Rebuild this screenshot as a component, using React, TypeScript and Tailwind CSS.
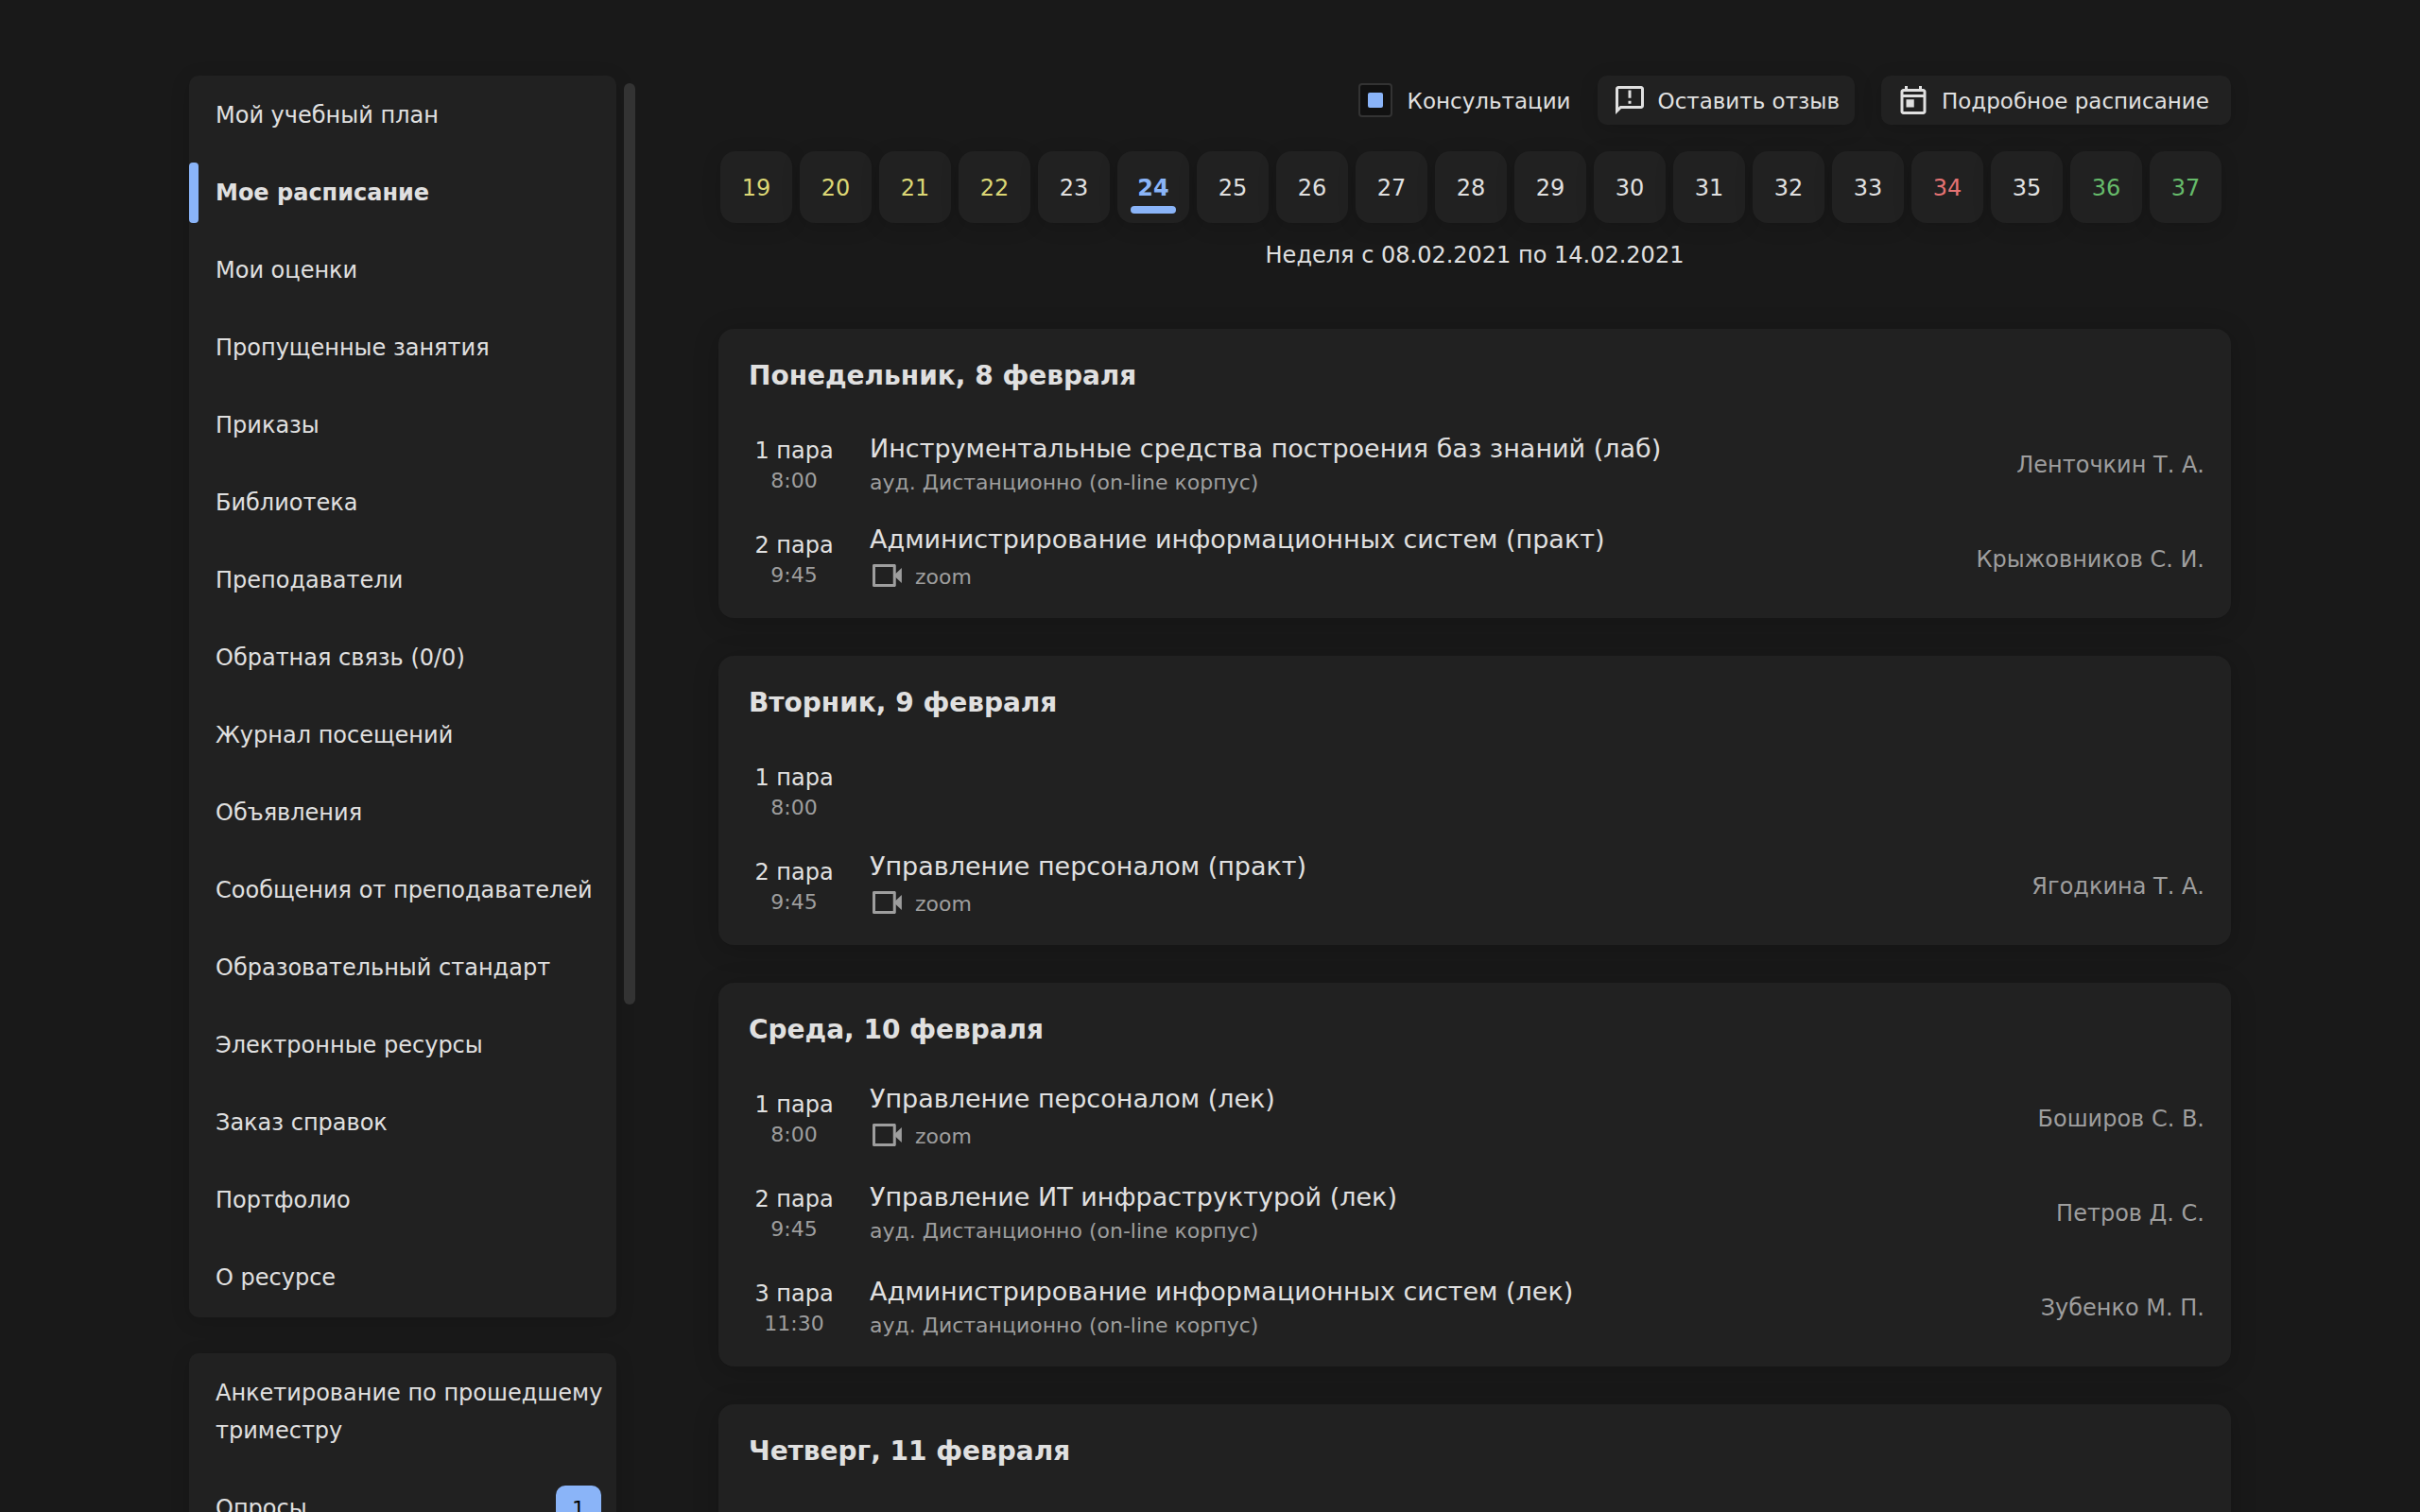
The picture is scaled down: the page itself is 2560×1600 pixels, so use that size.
import React from "react";

type Lesson = {
  pair: number;
  time: string;
  title?: string;
  place?: string;
  online?: boolean;
  teacher?: string;
};

type Day = { title: string; lessons: Lesson[] };

const ROOM = "ауд. Дистанционно (on-line корпус)";

const MENU = [
  "Мой учебный план",
  "Мое расписание",
  "Мои оценки",
  "Пропущенные занятия",
  "Приказы",
  "Библиотека",
  "Преподаватели",
  "Обратная связь (0/0)",
  "Журнал посещений",
  "Объявления",
  "Сообщения от преподавателей",
  "Образовательный стандарт",
  "Электронные ресурсы",
  "Заказ справок",
  "Портфолио",
  "О ресурсе",
];

const ACTIVE_ITEM = "Мое расписание";
const ACTIVE_WEEK = 24;
const WEEKS = Array.from({ length: 19 }, (_, i) => 19 + i);

const DAYS: Day[] = [
  {
    title: "Понедельник, 8 февраля",
    lessons: [
      { pair: 1, time: "8:00", title: "Инструментальные средства построения баз знаний (лаб)", place: ROOM, teacher: "Ленточкин Т. А." },
      { pair: 2, time: "9:45", title: "Администрирование информационных систем (практ)", online: true, teacher: "Крыжовников С. И." },
    ],
  },
  {
    title: "Вторник, 9 февраля",
    lessons: [
      { pair: 1, time: "8:00" },
      { pair: 2, time: "9:45", title: "Управление персоналом (практ)", online: true, teacher: "Ягодкина Т. А." },
    ],
  },
  {
    title: "Среда, 10 февраля",
    lessons: [
      { pair: 1, time: "8:00", title: "Управление персоналом (лек)", online: true, teacher: "Боширов С. В." },
      { pair: 2, time: "9:45", title: "Управление ИТ инфраструктурой (лек)", place: ROOM, teacher: "Петров Д. С." },
      { pair: 3, time: "11:30", title: "Администрирование информационных систем (лек)", place: ROOM, teacher: "Зубенко М. П." },
    ],
  },
  { title: "Четверг, 11 февраля", lessons: [] },
];

function weekColor(week: number) {
  if (week === ACTIVE_WEEK) return "font-bold text-[#8ab4f8]";
  if (week <= 22) return "text-[#dcd775]";
  if (week === 34) return "text-[#e57373]";
  if (week >= 36) return "text-[#66bb6a]";
  return "text-[#e0e0e0]";
}

function FeedbackIcon() {
  return (
    <svg viewBox="0 0 24 24" className="size-9 shrink-0" fill="currentColor" aria-hidden="true">
      <path d="M20 2H4c-1.1 0-2 .9-2 2v18l4-4h14c1.1 0 2-.9 2-2V4c0-1.1-.9-2-2-2zm0 14H5.2L4 17.2V4h16v12zM11 12.5h2v2h-2zM11 5h2v5.5h-2z" />
    </svg>
  );
}

function CalendarIcon() {
  return (
    <svg viewBox="0 0 24 24" className="size-9 shrink-0" fill="currentColor" aria-hidden="true">
      <path d="M19 4h-1V2h-2v2H8V2H6v2H5c-1.1 0-2 .9-2 2v14c0 1.1.9 2 2 2h14c1.1 0 2-.9 2-2V6c0-1.1-.9-2-2-2zm0 16H5V10h14v10zm0-12H5V6h14v2zM7 11.5h5.5V17H7z" />
    </svg>
  );
}

function VideoIcon() {
  return (
    <svg viewBox="0 0 24 24" className="size-9 shrink-0" fill="currentColor" aria-hidden="true">
      <path d="M17.5 4H3c-.6 0-1 .4-1 1v14c0 .6.4 1 1 1h14.5c.6 0 1-.4 1-1V5c0-.6-.4-1-1-1zm-1 14H4V6h12.500v12z" />
      <path d="M18 11l4.600-4.400v10.800L18 13z" />
    </svg>
  );
}

function Sidebar() {
  return (
    <aside className="flex w-[472px] shrink-0 gap-2">
      <div className="flex min-w-0 flex-1 flex-col gap-[38px]">
        <nav className="rounded-[10px] bg-[#212121] py-px shadow-[0_4px_20px_rgba(0,0,0,0.15)]">
          {MENU.map((item) => (
            <a
              key={item}
              href="#"
              className={`relative block py-[21px] pr-1 pl-7 leading-10 ${
                item === ACTIVE_ITEM
                  ? "font-bold before:absolute before:top-1/2 before:left-0 before:h-16 before:w-2.5 before:-translate-y-1/2 before:rounded-sm before:bg-[#8ab4f8]"
                  : ""
              }`}
            >
              {item}
            </a>
          ))}
        </nav>
        <nav className="rounded-[10px] bg-[#212121] py-px shadow-[0_4px_20px_rgba(0,0,0,0.15)]">
          <a href="#" className="block py-[21px] pr-1 pl-7 leading-10">
            Анкетирование по прошедшему триместру
          </a>
          <a href="#" className="flex items-center justify-between py-[17px] pr-4 pl-7">
            <span className="leading-10">Опросы</span>
            <span className="grid size-12 place-items-center rounded-[10px] bg-[#8ab4f8] text-[22px] text-black">1</span>
          </a>
        </nav>
      </div>
      <div className="mt-2 h-[975px] w-3 rounded-full bg-[#333333]" />
    </aside>
  );
}

function Toolbar() {
  return (
    <div className="flex items-center justify-end gap-7 text-[23px] leading-8">
      <label className="flex items-center gap-4">
        <input
          type="checkbox"
          defaultChecked
          className="grid size-9 appearance-none place-items-center rounded-sm border-2 border-[#333333] bg-[#111111] checked:before:size-4 checked:before:rounded-xs checked:before:bg-[#8ab4f8] checked:before:content-['']"
        />
        <span className="pt-0.5">Консультации</span>
      </label>
      <button type="button" className="flex items-center gap-3 rounded-[10px] bg-[#212121] px-4 py-2 shadow-[0_4px_20px_rgba(0,0,0,0.15)]">
        <FeedbackIcon />
        <span className="pt-0.5">Оставить отзыв</span>
      </button>
      <button type="button" className="flex min-w-[370px] items-center gap-3 rounded-[10px] bg-[#212121] px-4 py-2 shadow-[0_4px_20px_rgba(0,0,0,0.15)]">
        <CalendarIcon />
        <span className="pt-0.5">Подробное расписание</span>
      </button>
    </div>
  );
}

function LessonRow({ lesson }: { lesson: Lesson }) {
  return (
    <li className="flex h-[100px] items-center">
      <div className="w-24 shrink-0 pt-1 text-center leading-8">
        <div>{lesson.pair} пара</div>
        <div className="text-[22px] leading-8 text-[#9e9e9e]">{lesson.time}</div>
      </div>
      <div className="ml-8 min-w-0 flex-1">
        {lesson.title && <div className="text-[27px] leading-10">{lesson.title}</div>}
        {lesson.place && <div className="text-[22px] leading-8 text-[#9e9e9e]">{lesson.place}</div>}
        {lesson.online && (
          <a href="#" className="flex items-start gap-3 text-[22px] leading-10 text-[#9e9e9e]">
            <VideoIcon />
            zoom
          </a>
        )}
      </div>
      {lesson.teacher && <div className="pt-0.5 text-[#9e9e9e]">{lesson.teacher}</div>}
    </li>
  );
}

export default function App() {
  return (
    <div className="h-screen overflow-hidden bg-[#191919] font-['DejaVu_Sans',sans-serif] text-[24px] text-[#e0e0e0]">
      <div className="flex gap-[88px] px-[200px] pt-20">
        <Sidebar />
        <main className="min-w-0 flex-1">
          <Toolbar />
          <div className="mt-7 flex gap-2 pl-0.5">
            {WEEKS.map((week) => (
              <button
                key={week}
                type="button"
                className={`relative size-19 shrink-0 rounded-2xl bg-[#212121] pt-0.5 shadow-[0_4px_20px_rgba(0,0,0,0.15)] ${weekColor(week)}`}
              >
                {week}
                {week === ACTIVE_WEEK && (
                  <span className="absolute inset-x-3.5 bottom-2.5 h-2 rounded-sm bg-[#8ab4f8]" />
                )}
              </button>
            ))}
          </div>
          <p className="mt-4 text-center leading-9">Неделя с 08.02.2021 по 14.02.2021</p>
          <div className="mt-15 flex flex-col gap-10">
            {DAYS.map((day) => (
              <section
                key={day.title}
                className="rounded-2xl bg-[#212121] pt-8 pr-7 pb-[13px] pl-8 shadow-[0_4px_28px_rgba(0,0,0,0.2)]"
              >
                <h2 className="mb-[25px] text-[28px] leading-9 font-bold">{day.title}</h2>
                <ul>
                  {day.lessons.map((lesson) => (
                    <LessonRow key={lesson.pair} lesson={lesson} />
                  ))}
                </ul>
                {day.lessons.length === 0 && <div className="h-[100px]" />}
              </section>
            ))}
          </div>
        </main>
      </div>
    </div>
  );
}
